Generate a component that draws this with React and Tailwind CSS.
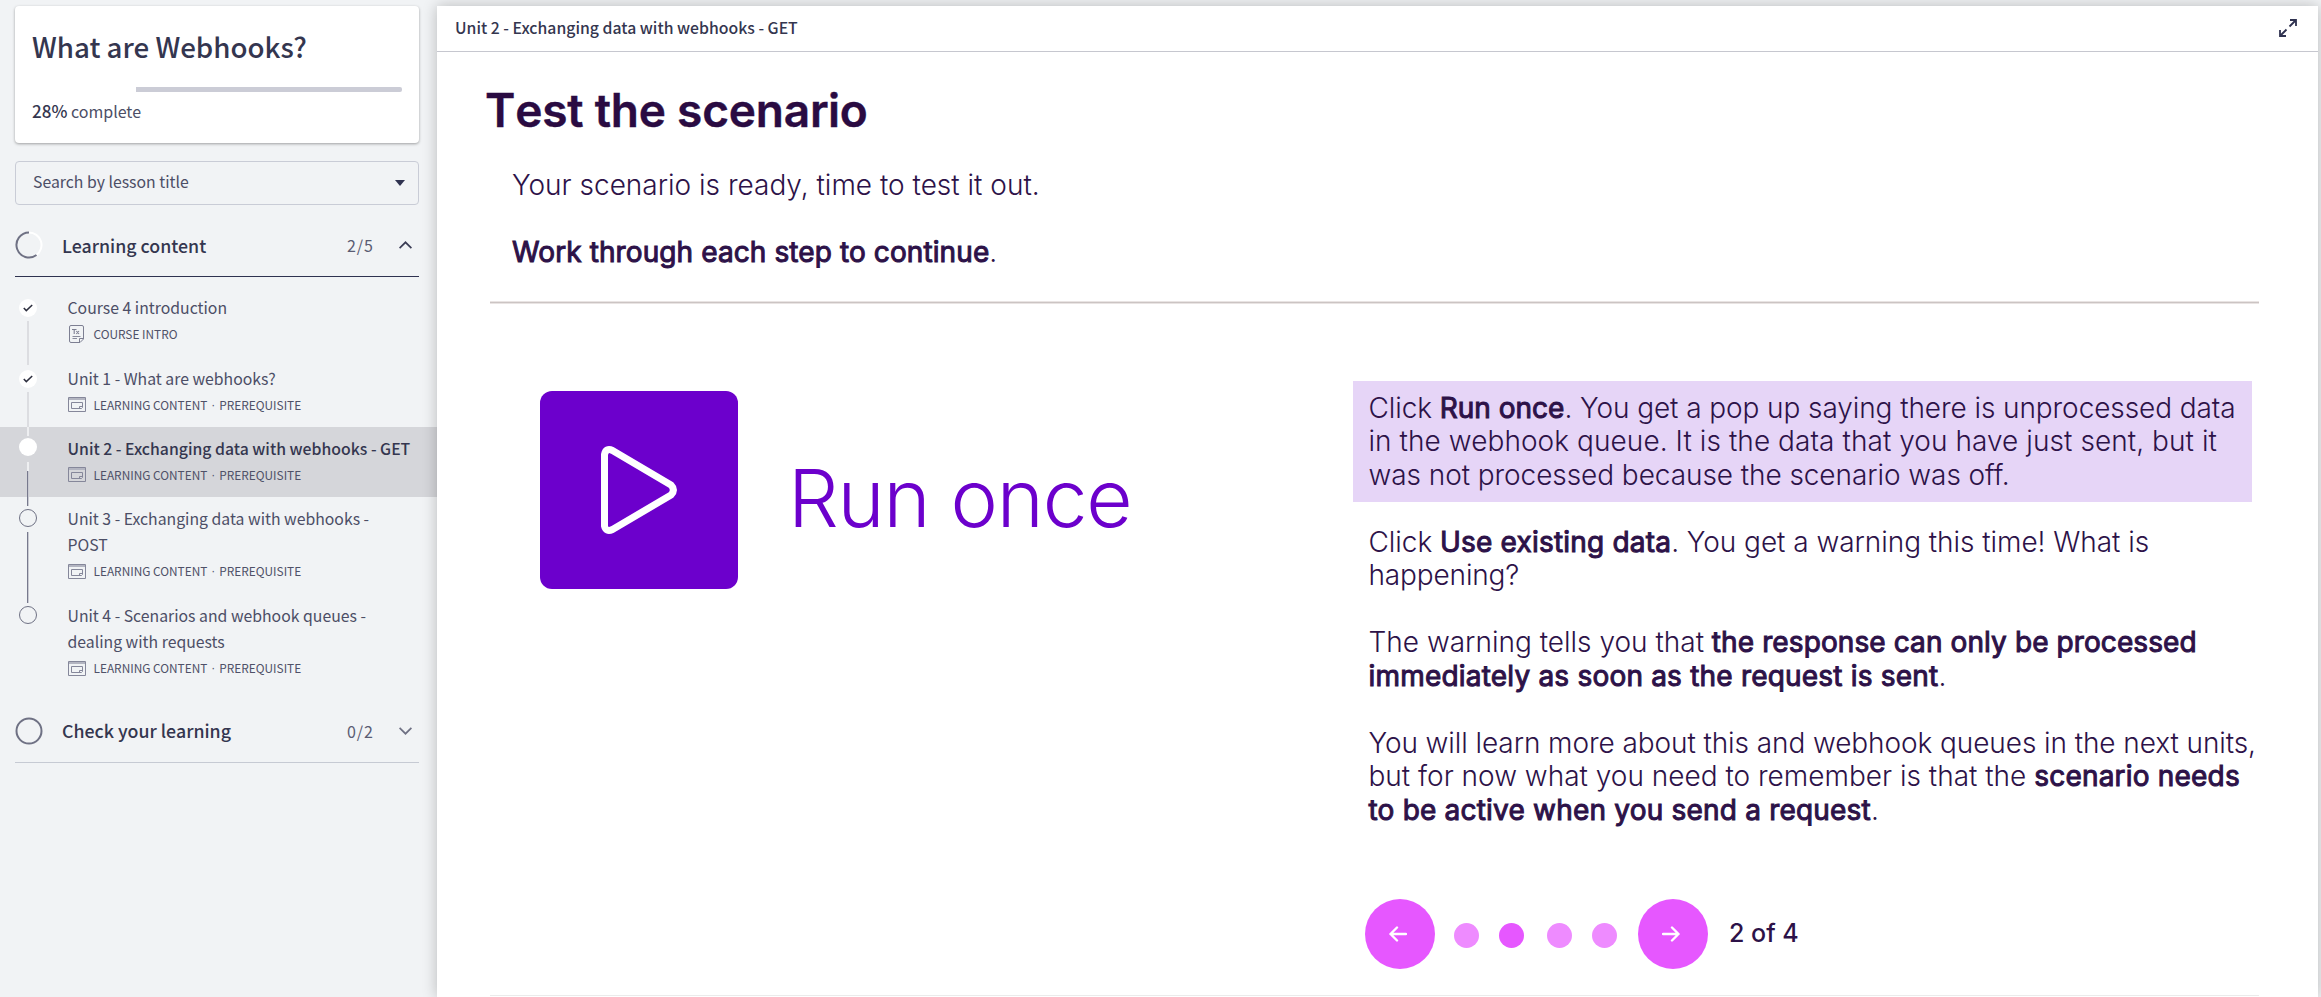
import React from 'react';

function TextDocIcon() {
  return (
    <svg className="ml-px h-[18px] w-[15px] shrink-0" viewBox="0 0 15 18" fill="none" stroke="#7d7f92">
      <path d="M2 .5h11a1.500 1.500 0 0 1 1.500 1.500v12L11 17.500H2A1.500 1.500 0 0 1 .5 16V2A1.500 1.500 0 0 1 2 .5zM14.500 13.500H10.500v4" />
      <path d="M3.500 11.500h8M3.500 13.500h4.500" strokeWidth=".9" />
      <path d="M3 4.500h4.500M5.200 4.500v4.500M7.300 6l2.700 3M10 6L7.300 9" strokeWidth="1.100" />
    </svg>
  );
}

function LessonIcon() {
  return (
    <svg className="h-[15px] w-[18px] shrink-0" viewBox="0 0 18 15" fill="none" stroke="#85879a">
      <path d="M.5.500h17v14H.5z" />
      <path d="M1 2h16" strokeWidth="2" stroke="#b3b5c1" />
      <path d="M3.500 5.500h11v5l-1 1h-10zM14 9.500h-2.500v2" />
    </svg>
  );
}

function Status({ state }) {
  if (state === 'done')
    return (
      <span className="flex size-[18px] items-center justify-center rounded-full bg-white">
        <svg className="h-[8px] w-[10px]" viewBox="0 0 10 8" fill="none" stroke="#2c2e3e" strokeWidth="1.500">
          <path d="M.8 4l2.500 2.600L9.200 1" />
        </svg>
      </span>
    );
  if (state === 'current') return <span className="block size-[18px] rounded-full bg-white" />;
  return <span className="block size-[18px] rounded-full border border-[#6f7184]" />;
}

const PREREQ = ['LEARNING CONTENT', 'PREREQUISITE'];
const LIGHT = 'bg-[#dcdde1]';
const PALE = 'bg-[#eeeff1]';
const DARK = 'border-l border-[#77798d] bg-[#c9cad2]';

const LESSONS = [
  { lines: ['Course 4 introduction'], meta: ['COURSE INTRO'], state: 'done', intro: true, top: '', bottom: LIGHT },
  { lines: ['Unit 1 - What are webhooks?'], meta: PREREQ, state: 'done', top: LIGHT, bottom: LIGHT },
  { lines: ['Unit 2 - Exchanging data with webhooks - GET'], meta: PREREQ, state: 'current', top: PALE, bottom: DARK },
  { lines: ['Unit 3 - Exchanging data with webhooks -', 'POST'], meta: PREREQ, state: 'todo', top: DARK, bottom: DARK },
  { lines: ['Unit 4 - Scenarios and webhook queues -', 'dealing with requests'], meta: PREREQ, state: 'todo', top: DARK, bottom: '' },
];

function Lesson({ lesson }) {
  const current = lesson.state === 'current';
  return (
    <li className={`flex ${current ? 'bg-[#d5d6da]' : ''} ${lesson.lines.length > 1 ? 'h-[97px]' : 'h-[70.3px]'}`}>
      <div className="flex w-[56px] shrink-0 flex-col items-center">
        <div className={`h-[8.600px] w-[2px] ${lesson.top}`} />
        <div className={`h-[26.400px] ${lesson.state === 'done' ? 'pt-[4.400px]' : 'pt-[2.700px]'}`}>
          <Status state={lesson.state} />
        </div>
        {current && <div className={`h-[9px] w-[2px] ${PALE}`} />}
        <div className={`w-[2px] flex-1 ${lesson.bottom}`} />
      </div>
      <div className="ml-[11.500px] flex flex-col pt-[8.900px]">
        {lesson.lines.map((l) => (
          <div
            key={l}
            className={`h-[26px] whitespace-nowrap text-[15.800px] leading-[26px] ${current ? 'font-medium text-[#34364f]' : 'text-[#4c4e66]'}`}
          >
            {l}
          </div>
        ))}
        <div className="mt-px flex h-[24px] items-center">
          <span className="flex w-[26px] shrink-0">{lesson.intro ? <TextDocIcon /> : <LessonIcon />}</span>
          <span className="flex whitespace-nowrap text-[11.850px] leading-[24px] text-[#4f5168]">
            <span>{lesson.meta[0]}</span>
            {lesson.meta[1] && (
              <>
                <span className="w-[12px] text-center font-['Liberation_Sans',sans-serif]">·</span>
                <span>{lesson.meta[1]}</span>
              </>
            )}
          </span>
        </div>
      </div>
    </li>
  );
}

function Section({ title, count, open }) {
  return (
    <div className={`ml-[15px] mr-[18px] flex h-[63px] items-center border-b ${open ? 'border-[#2f3250]' : 'border-[#c6cad3]'}`}>
      <svg className="size-[28px] shrink-0" viewBox="0 0 28 28" fill="none" strokeWidth="2">
        {open ? (
          <>
            <path d="M14 1.500a12.500 12.500 0 0 1 7.500 22.500" stroke="#fff" />
            <path d="M14 1.500a12.500 12.500 0 1 0 7.500 22.500" stroke="#6f7184" />
          </>
        ) : (
          <circle cx="14" cy="14" r="12.500" stroke="#6f7184" />
        )}
      </svg>
      <span className="ml-[19px] text-[17.800px] font-medium">{title}</span>
      <span className="ml-auto mr-[25px] text-[16px] tracking-[1px] text-[#5a5c73]">{count}</span>
      <svg className="mr-[7px] h-[8px] w-[13px]" viewBox="0 0 13 8" fill="none" stroke={open ? '#3b3d55' : '#6f7184'} strokeWidth="1.700">
        <path d={open ? 'M.6 7.200L6.500 1.300l5.900 5.900' : 'M.6.800l5.900 5.900L12.400.8'} />
      </svg>
    </div>
  );
}

function B({ children, className = 'tracking-[0.2px]' }) {
  return <strong className={`font-normal [-webkit-text-stroke:1px_#2d1248] ${className}`}>{children}</strong>;
}

function Arrow({ flip }) {
  return (
    <svg
      className={`h-[16px] w-[18px] ${flip ? 'rotate-180' : ''}`}
      viewBox="0 0 18 16"
      fill="none"
      stroke="#fff"
      strokeWidth="2.400"
      strokeLinecap="round"
      strokeLinejoin="round"
    >
      <path d="M17 8H1.500M8 1.500L1.500 8 8 14.500" />
    </svg>
  );
}

export default function App() {
  return (
    <div className="flex h-[997px] w-[2321px] overflow-hidden bg-[#f1f3f5] font-['Noto_Sans_CJK_SC',sans-serif] text-[#34364f]">
      <aside className="flex w-[437px] shrink-0 flex-col pt-[6px]">
        <div className="ml-[15px] mr-[18px] flex h-[137px] flex-col rounded-[4px] bg-white px-[17px] shadow-[0_1px_3px_rgba(0,0,0,0.35)]">
          <h1 className="mt-[19px] h-[42px] whitespace-nowrap text-[27.700px] font-medium leading-[42px]">What are Webhooks?</h1>
          <div className="mt-[20px] flex h-[5px] justify-end">
            <div className="w-[266px] rounded-r-[2px] bg-[#cbccd6]" />
          </div>
          <div className="mt-[6px] text-[16px] leading-[26px] text-[#4c4e66]">
            <span className="text-[17px] font-medium text-[#34364f]">28%</span> complete
          </div>
        </div>
        <div className="ml-[15px] mr-[18px] mt-[18px] flex h-[44px] items-center justify-between rounded-[4px] border border-[#c9ccd6] pl-[17px] pr-[13px] text-[15.800px] leading-[26px] text-[#4c4e66]">
          <span className="-mt-[2px]">Search by lesson title</span>
          <svg className="h-[6px] w-[10px]" viewBox="0 0 10 6" fill="#2f3250">
            <path d="M0 0h10L5 6z" />
          </svg>
        </div>
        <div className="mt-[9px]">
          <Section title="Learning content" count="2/5" open />
        </div>
        <ul className="mt-[9.400px]">
          {LESSONS.map((l) => (
            <Lesson key={l.lines[0]} lesson={l} />
          ))}
        </ul>
        <div className="mt-[8.500px]">
          <Section title="Check your learning" count="0/2" />
        </div>
      </aside>

      <main className="mt-[6px] flex w-[1881px] shrink-0 flex-col bg-white shadow-[0_0_14px_rgba(0,0,0,0.24)]">
        <header className="flex h-[46px] shrink-0 items-center justify-between border-b border-[#c6c7cf] pl-[18px] pr-[21px]">
          <span className="-mt-px text-[15.800px] font-medium leading-[26px]">Unit 2 - Exchanging data with webhooks - GET</span>
          <svg className="-mt-px h-[18px] w-[18px]" viewBox="0 0 18 18" fill="none" stroke="#2f3250" strokeWidth="1.800">
            <path d="M11 1h6v6M17 1l-6.500 6.500M1 11v6h6M1 17l6.500-6.500" />
          </svg>
        </header>

        <div className="flex flex-col font-['Inter',sans-serif] text-[#2d1248]">
          <h2 className="ml-[48px] mt-[30px] h-[56px] text-[46px] font-semibold leading-[56px] tracking-[-0.200px] text-[#2a0b42] [-webkit-text-stroke:0.4px_#2a0b42] [font-kerning:none]">
            Test the scenario
          </h2>
          <div className="ml-[75px] mt-[31px] flex flex-col gap-[33.5px] text-[28px] font-light leading-[33.5px]">
            <p>Your scenario is ready, time to test it out.</p>
            <p>
              <B className="tracking-[0.1px]">Work through each step to continue</B>.
            </p>
          </div>
          <div className="ml-[53px] mt-[31px] h-[3px] w-[1769px] border-y border-[#e9e4e3] bg-[#cbc4c3]" />

          <div className="flex">
            <div className="flex w-[916px] shrink-0 pl-[103px] pt-[87px]">
              <div className="flex size-[198px] rounded-[12px] bg-[#6c00cc] pl-[60px] pt-[54px]">
                <svg className="h-[90px] w-[78px]" viewBox="0 0 78 90" fill="none" stroke="#fff" strokeWidth="7" strokeLinejoin="round">
                  <path d="M4.500 9.500v71.500q1.500 6.500 8 3.500L71 50q5-5 0-10L12.500 5.500q-6.500-3-8 4z" />
                </svg>
              </div>
              <span className="ml-[50px] mt-[58px] h-[97px] whitespace-nowrap text-[80px] font-light leading-[97px] tracking-[-1.200px] text-[#6c00cc]">
                Run once
              </span>
            </div>

            <div className="flex flex-col pt-[77px] text-[28px] font-light leading-[33.5px]">
              <div className="h-[121px] w-[899px] whitespace-nowrap bg-[#e6d5f7] pl-[15.5px] pt-[11px]">
                <p className="tracking-[-0.085px]">
                  Click <B className="tracking-[0px]">Run once</B>. You get a pop up saying there is unprocessed data
                </p>
                <p className="tracking-[0.065px]">in the webhook queue. It is the data that you have just sent, but it</p>
                <p className="tracking-[-0.07px]">was not processed because the scenario was off.</p>
              </div>
              <div className="mt-[24px] flex flex-col gap-[33.5px] whitespace-nowrap pl-[15.5px]">
                <div>
                  <p className="tracking-[-0.05px]">
                    Click <B>Use existing data</B>. You get a warning this time! What is
                  </p>
                  <p className="tracking-[-0.15px]">happening?</p>
                </div>
                <div>
                  <p>
                    The warning tells you that <B className="tracking-[0.1px]">the response can only be processed</B>
                  </p>
                  <p>
                    <B>immediately as soon as the request is sent</B>.
                  </p>
                </div>
                <div>
                  <p className="tracking-[-0.085px]">You will learn more about this and webhook queues in the next units,</p>
                  <p>
                    but for now what you need to remember is that the <B>scenario needs</B>
                  </p>
                  <p>
                    <B>to be active when you send a request</B>.
                  </p>
                </div>
              </div>
              <div className="mt-[72px] flex h-[70px] items-center pl-[12px]">
                <div className="flex size-[70px] items-center justify-center rounded-full bg-[#e657ff] pr-[4px]">
                  <Arrow />
                </div>
                <div className="mt-[3px] flex">
                  <div className="ml-[19px] size-[25px] rounded-full bg-[#ee8bff]" />
                  <div className="ml-[20px] size-[25px] rounded-full bg-[#e657ff]" />
                  <div className="ml-[23px] size-[25px] rounded-full bg-[#ee8bff]" />
                  <div className="ml-[20px] size-[25px] rounded-full bg-[#ee8bff]" />
                </div>
                <div className="ml-[21px] flex size-[70px] items-center justify-center rounded-full bg-[#e657ff] pl-0 pr-[4px]">
                  <Arrow flip />
                </div>
                <span className="ml-[21px] text-[25px] font-medium">2 of 4</span>
              </div>
            </div>
          </div>
          <div className="ml-[53px] mt-[26px] h-px w-[1769px] shrink-0 bg-[#ebebeb]" />
        </div>
      </main>
    </div>
  );
}
